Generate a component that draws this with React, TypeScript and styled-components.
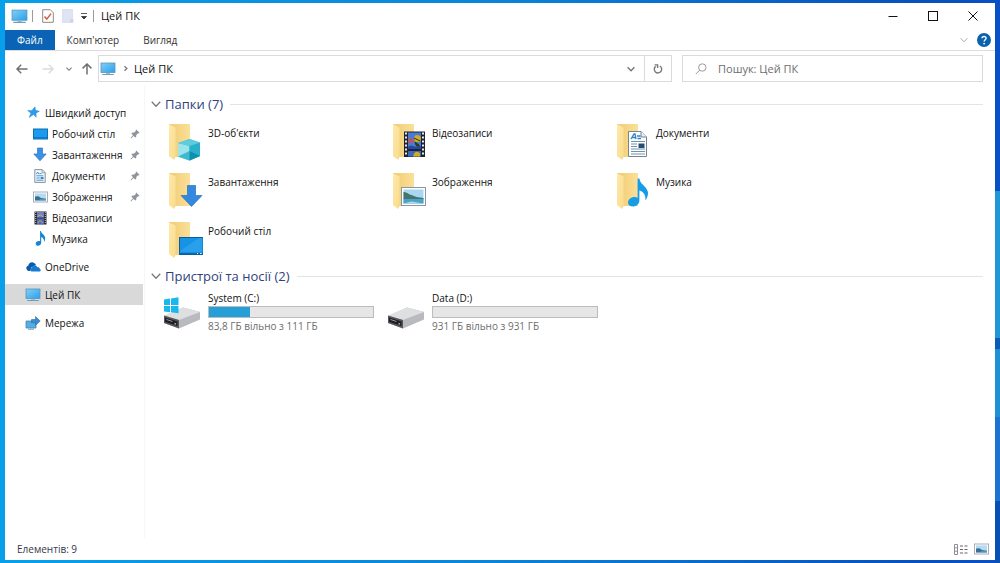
import React from "react";
import styled, { createGlobalStyle } from "styled-components";

const GlobalStyle = createGlobalStyle`
  * { box-sizing: border-box; }
  body { margin: 0; font-family: "Open Sans", "Noto Sans", sans-serif; font-size: 11px; line-height: 16px; color: #111; }
  button, input { font: inherit; color: inherit; margin: 0; }
  svg { display: block; flex: none; }
  h2, p, ul { margin: 0; padding: 0; }
`;

const Desktop = styled.div`
  min-height: 100vh;
  display: flex;
  padding: 3px 5px 3px 5px;
  background:
    linear-gradient(180deg, #0850c4 0 34%, #2098d8 34% 60%, #0a5cb4 60% 62%, #2090d4 62% 74%, #1a74d0 74% 89%, #0a4fb4 89%) right / 5px 100% no-repeat,
    linear-gradient(90deg, #08a0ea 0%, #0a84d8 50%, #0750bd 92%, #0a4fc4 100%);
`;
const Window = styled.main`
  flex: 1;
  min-width: 0;
  display: flex;
  flex-direction: column;
  background: #fff;
`;
const IconButton = styled.button<{ $w?: number }>`
  width: ${(p) => p.$w ?? 20}px;
  padding: 0;
  border: 0;
  background: none;
  display: flex;
  align-items: center;
  justify-content: center;
  align-self: stretch;
`;
const TitleBar = styled.header`
  height: 27px;
  display: flex;
  align-items: center;
  padding: 0 2px 1px 6px;
`;
const Separator = styled.span`
  width: 1px;
  height: 12px;
  background: #9a9a9a;
`;
const WindowTitle = styled.h1`
  flex: 1;
  margin: 0 0 0 5px;
  font-size: 11px;
  font-weight: 400;
`;
const TabRow = styled.nav`
  height: 21px;
  display: flex;
  padding-right: 1px;
  border-bottom: 1px solid #dcdcdc;
`;
const Tab = styled.button<{ $active?: boolean }>`
  border: 0;
  padding: 0 12px;
  font-size: 10px;
  color: ${(p) => (p.$active ? "#fff" : "#333")};
  background: ${(p) => (p.$active ? "#0a63b5" : "none")};
`;
const Spacer = styled.span`
  flex: 1;
`;
const NavRow = styled.div`
  display: flex;
  align-items: center;
  padding: 4px 12px 4px 6px;
`;
const AddressBar = styled.div`
  flex: 1;
  height: 27px;
  display: flex;
  align-items: center;
  border: 1px solid #dadada;
  padding-left: 1px;
`;
const Crumb = styled.span`
  flex: 1;
`;
const Refresh = styled(IconButton)`
  border-left: 1px solid #dadada;
`;
const SearchBox = styled.label`
  width: 301px;
  height: 27px;
  margin-left: 10px;
  padding: 0 12px;
  display: flex;
  align-items: center;
  gap: 11px;
  border: 1px solid #dadada;
`;
const SearchInput = styled.input`
  flex: 1;
  min-width: 0;
  padding: 0;
  border: 0;
  outline: 0;
  background: none;
  &::placeholder { color: #6d6d6d; opacity: 1; }
`;
const Body = styled.div`
  flex: 1;
  display: flex;
  font-size: 10px;
`;
const Sidebar = styled.nav`
  width: 140px;
  padding-top: 16px;
  border-right: 1px solid #f7f7f7;
`;
const NavGroup = styled.ul`
  list-style: none;
  margin-bottom: 7px;
`;
const NavLink = styled.a<{ $nested?: boolean; $selected?: boolean }>`
  height: 21px;
  display: flex;
  align-items: center;
  gap: 4px;
  margin-right: 1px;
  padding: 0 3px 0 ${(p) => (p.$nested ? 27 : 20)}px;
  color: inherit;
  text-decoration: none;
  background: ${(p) => (p.$selected ? "#d9d9d9" : "none")};
`;
const IconSlot = styled.span`
  flex: none;
  width: 16px;
  display: flex;
  justify-content: center;
`;
const NavText = styled.span`
  flex: 1;
  white-space: nowrap;
`;
const Content = styled.section`
  flex: 1;
  min-width: 0;
  padding: 9px 12px 0 6px;
`;
const GroupHeader = styled.h2`
  display: flex;
  align-items: center;
  gap: 4px;
  height: 18px;
  font-size: 13px;
  font-weight: 400;
  color: #2f427d;
  &::after { content: ""; flex: 1; height: 1px; margin-left: 3px; background: #e4e4e4; }
`;
const Tiles = styled.ul`
  list-style: none;
  display: grid;
  grid-template-columns: repeat(auto-fill, 224px);
  grid-auto-rows: 49px;
  padding: 7px 0 0 10px;
`;
const Tile = styled.li`
  display: flex;
  gap: 6px;
  padding-top: 3px;
`;
const TileIcon = styled.span`
  width: 41px;
`;
const TileText = styled.div<{ $drive?: boolean }>`
  flex: 1;
  padding-top: ${(p) => (p.$drive ? 0 : 2)}px;
  margin-right: ${(p) => (p.$drive ? 11 : 0)}px;
`;
const DriveTiles = styled(Tiles)`
  padding-top: 2px;
`;
const Meter = styled.div`
  height: 12px;
  border: 1px solid #bcbcbc;
  background: #e6e6e6;
`;
const Fill = styled.div`
  height: 100%;
  background: #269ed8;
`;
const DriveInfo = styled.p`
  color: #6d6d6d;
`;
const StatusBar = styled.footer`
  height: 22px;
  display: flex;
  align-items: center;
  padding: 0 4px 0 12px;
  font-size: 10px;
  color: #33384a;
`;

/* ---------- icons ---------- */

const Monitor = ({ w = 16 }: { w?: number }) => (
  <svg width={w} height={w} viewBox="0 0 16 16">
    <defs>
      <linearGradient id="scr" x1="0" y1="0" x2="1" y2="1">
        <stop offset="0" stopColor="#7fd0fa" />
        <stop offset="1" stopColor="#2c9fe8" />
      </linearGradient>
    </defs>
    <rect x="1" y="2" width="14" height="9.5" fill="url(#scr)" stroke="#5794bd" strokeWidth=".8" />
    <path d="M6 12h4v1.2H6z" fill="#a3bccd" />
    <path d="M2.5 13h11l.7 1H1.8z" fill="#6f9fbe" />
  </svg>
);
const Chevron = ({ dir = "down", size = 8, color = "#777", w = 1.4 }: { dir?: string; size?: number; color?: string; w?: number }) => (
  <svg width={size} height={size} viewBox="0 0 8 8" fill="none" stroke={color} strokeWidth={w}>
    <path d={dir === "down" ? "M.6 2.2 4 5.8 7.4 2.2" : "M2.8 1.4 5.6 4 2.8 6.6"} />
  </svg>
);
const Arrow = ({ dir, color }: { dir: "left" | "right" | "up"; color: string }) => (
  <svg width="12" height="12" viewBox="0 0 12 12" fill="none" stroke={color} strokeWidth="1.5">
    <path
      d={
        dir === "left"
          ? "M11.5 6H1M5.2 1.8 1 6l4.2 4.2"
          : dir === "right"
            ? "M.5 6H11M6.8 1.8 11 6l-4.2 4.2"
            : "M6 11.5V1M1.6 5.4 6 1l4.4 4.4"
      }
    />
  </svg>
);
const Star = () => (
  <svg width="13" height="13" viewBox="0 0 12 12">
    <path d="M7.400.8 7.900 4l3.500.8-3.100 1.800.2 3.800L6 7.900 2 10.600l1.600-3.900L.6 4.200l3.900-.1z" fill="#2b9df0" stroke="#2380c8" strokeWidth=".4" />
  </svg>
);
const Screen = () => (
  <svg width="15" height="12" viewBox="0 0 15 12">
    <rect x=".5" y="1" width="14" height="10" fill="#1b9bf0" stroke="#0f6fb4" />
    <path d="M1 9.8h13" stroke="#0c6cb8" strokeWidth="1" />
  </svg>
);
const DownArrow = () => (
  <svg width="14" height="15" viewBox="0 0 14 15">
    <path d="M4.5 1h5v6h3.7L7 13.8.8 7h3.7z" fill="#3b92e4" stroke="#2e75c0" strokeWidth=".7" />
  </svg>
);
const Doc = () => (
  <svg width="12" height="14" viewBox="0 0 12 14">
    <path d="M.8.6h7.4l3 3v9.8H.8z" fill="#f6f9fc" stroke="#77858f" strokeWidth=".9" />
    <path d="M8 .8v3h3" fill="none" stroke="#77858f" strokeWidth=".7" />
    <path d="M2.4 5.2 3.6 3 5 5.2M5.5 4.6h2M2.4 6.8h7M2.4 9h3.4M2.4 11.2h7" stroke="#3387c8" fill="none" strokeWidth=".9" />
    <path d="M6.6 8h3v2h-3z" fill="#3387c8" />
  </svg>
);
const Picture = () => (
  <svg width="15" height="12" viewBox="0 0 15 12">
    <rect x=".5" y="1" width="14" height="10" fill="#fff" stroke="#a3b0bb" />
    <rect x="2" y="2.4" width="11" height="7.2" fill="#b5daf3" />
    <path d="M2 5.400 5.5 5.200 8 7l5 .8v1.8H2z" fill="#3a6f90" />
    <path d="M7 8.400h6v1.200H6z" fill="#74b9dc" />
  </svg>
);
const Film = () => (
  <svg width="13" height="14" viewBox="0 0 13 14">
    <path d="M.5.5h12v13H.5z" fill="#27272f" />
    <path d="M3 1h7v5.6H3z" fill="#6d82c6" />
    <path d="M3 7.4h7V13H3z" fill="#5366b8" />
    <path d="m3.4 5.8 3-2 2.6 2M3.4 12l2.6-2.4L9 12" stroke="#c7b94a" fill="none" />
    <path d="M1.7 1v12M11.3 1v12" stroke="#bbc" strokeWidth="1.1" strokeDasharray="1 1" />
  </svg>
);
const Note = ({ w = 11, h = 15 }: { w?: number; h?: number }) => (
  <svg width={w} height={h} viewBox="0 0 18 28">
    <path d="M8.2 0h1.6c.5 5 7.5 7 8 13 .2 3-1 5.600-2.300 7.600.8-5.200-2-8.600-5.200-9.600V22c0 3-2.600 5.500-5.700 5.500C2 27.500 0 26 0 23.600c0-3 3-5 5.600-5 1 0 1.900.2 2.600.6z" fill="#1686d4" />
  </svg>
);
const Cloud = () => (
  <svg width="15" height="11" viewBox="0 0 15 11">
    <path d="M1.500 9.500C-.3 8-.2 5.400 2.200 4.800 2.400 2 5.700.2 8.200 1.900c1 .6 1.500 1.300 1.800 2L5.400 6.400 4.200 10H2.600c-.4 0-.8-.2-1.100-.5z" fill="#0b5cae" />
    <path d="M5.400 10.500C3.700 9.700 4 7.300 5.900 7.100 6.300 4.400 9.900 3.700 11.200 6c2 0 2.500 1 2.500 1.800 1.400.5 1.300 2.400-.2 2.700z" fill="#1a7bd0" />
  </svg>
);
const Network = () => (
  <svg width="16" height="16" viewBox="0 0 16 16">
    <path d="M1 6h10v7H1z" fill="#54aee6" stroke="#4c86ac" strokeWidth=".8" />
    <path d="M3 14.200h6" stroke="#86a6bb" strokeWidth="1.200" />
    <path d="M6.500 4.500h4V1.600L15.200 6l-4.700 4.500V7.800h-4z" fill="#3b8ccd" stroke="#2a6da6" strokeWidth=".6" />
  </svg>
);
const Pin = () => (
  <svg width="10" height="10" viewBox="0 0 10 10">
    <path d="M6.200.6 9.500 3.800 8.600 4.400 8 4.200 6.300 6 6.200 8 5.300 8.600 3.600 6.900 1 9.400.5 9 3 6.300 1.400 4.600 2 3.800l2-.2L5.900 1.900 5.700 1.200z" fill="#8d949b" />
  </svg>
);

const Folder = ({ children }: { children: React.ReactNode }) => (
  <svg width="42" height="42" viewBox="0 0 42 42">
    <defs>
      <linearGradient id="fb" x1="0" y1="0" x2="1" y2="0">
        <stop offset="0" stopColor="#f0cb70" />
        <stop offset="1" stopColor="#fbe09a" />
      </linearGradient>
      <linearGradient id="ff" x1="0" y1="0" x2="1" y2="1">
        <stop offset="0" stopColor="#fde9ac" />
        <stop offset="1" stopColor="#fadb8a" />
      </linearGradient>
    </defs>
    <path d="M8 1h21v33H10z" fill="url(#fb)" />
    <path d="M8 1.300 14.600 4.500v29.500L13.200 37 8 33z" fill="url(#ff)" />
    {children}
  </svg>
);
const overlays: Record<string, React.ReactNode> = {
  cube: (
    <g>
      <path d="m17 20 11.500-4L39 19.500v13.500L28.500 37.500 17 33.500z" fill="#35b9d2" />
      <path d="m17 20 11.500 3v14.500L17 33.500z" fill="#9be4ec" />
      <path d="m28.500 23 10.500-3.500v13.500l-10.500 4.500z" fill="#2bb0ca" />
      <path d="m17 20 11.500-4L39 19.500 28.500 23z" fill="#5fcbdd" />
      <path d="m17 33.500 11.500-5.500v9.500z" fill="#3fb9cd" />
      <path d="M28.500 28 39 33l-10.500 4.500z" fill="#0f8fae" />
    </g>
  ),
  down: <path d="M26.500 13.500h8v10H41L30.500 34.500 20 23.500h6.500z" fill="#3388e0" stroke="#2a70be" strokeWidth=".7" />,
  screen: (
    <g>
      <rect x="18.500" y="16.500" width="23.500" height="17" fill="#1693e6" stroke="#0d5c9c" />
      <path d="M19 30 38 17h3.500v14H19z" fill="#35a8f0" opacity=".6" />
      <path d="M19 32.500h22.500" stroke="#0b6ab5" strokeWidth="1.200" />
      <path d="M36 32.500h1M39 32.500h1.500" stroke="#fff" />
    </g>
  ),
  film: (
    <g>
      <path d="M19 8.500h21V34H19z" fill="#1e2230" />
      <path d="M23 9.500h13V26H23z" fill="#4a7bd4" />
      <path d="M23 28h13v5.500H23z" fill="#3e68bd" />
      <path d="M23 16c2-2 3-1 6 1v3h-6z" fill="#b15873" />
      <path d="M29 15c0-4 6-4 7 0l-1 4h-5zM29 31c1-3 5-3 6 0v2.500h-7z" fill="#d0ad20" />
      <path d="m29 15 6 3m-5 1 4 3v3l-3-3z" stroke="#25351c" fill="#33421d" />
      <path d="M23 24c3-3 6 1 13-1v3H23z" fill="#2a489a" />
      <path d="M21 9.500v24M38 9.500v24" stroke="#fff" strokeWidth="1.800" strokeDasharray="2 2" />
    </g>
  ),
  picture: (
    <g>
      <rect x="16.500" y="15.500" width="24" height="18" fill="#fff" stroke="#8997a3" />
      <path d="M18.500 17.500h20v14h-20z" fill="#a9d7f3" />
      <path d="M18.500 20c3-.5 5 2.500 8 3l5 2 7 1v1.500h-20z" fill="#45766a" />
      <path d="M18.500 27h20v4.500h-20z" fill="#4aa3cd" />
      <path d="m18.500 31.500 8-2 12 2z" fill="#bcd9df" />
    </g>
  ),
  doc: (
    <g>
      <path d="M19.500 8.500H32l5.500 5.500v19.500h-18z" fill="#fff" stroke="#758593" />
      <path d="M32 8.500V14h5.500" fill="#e7eef4" stroke="#758593" />
      <path d="m22 16 3-5h1l1 5m-4-1.500h4M28 13h3.500M28.500 15.500H32" fill="none" stroke="#2d84c8" strokeWidth="1.300" />
      <path d="M22 18.500h14M22 21h6M22 23.500h6M22 26h14M22 28.500h14M22 31h14" stroke="#6f93ae" />
      <path d="M29.500 20.500h6V25h-6z" fill="#264e74" />
    </g>
  ),
  note: (
    <path transform="translate(19 6.500)" d="M9.600 0h1.800c.5 6 8 8 8.600 14 .2 3-1 5.600-2.600 8 .6-5.600-2-9-6-10v9.500c0 3.600-2.600 6.500-6.200 6.500C2 28 0 26.500 0 24c0-3.200 3.300-5.600 6.400-5.600 1.200 0 2.300.3 3.200.8z" fill="#159de8" />
  ),
};

const DriveIcon = ({ windows }: { windows?: boolean }) => (
  <svg width="41" height="42" viewBox="0 0 41 42">
    <path d="m3 26 19-8.500 17 4.500v7.500L18 38.500 3 33z" fill="#b9babd" />
    <path d="m3 25.500 19-8 17 4.500-21 8z" fill="#dedfe1" />
    <path d="m3 25.500 15 4.500v8.500L3 33z" fill="#55575a" />
    <path d="m4 27.500 12.500 4V36L4 31.800z" fill="#1c1d20" />
    <path d="m5.500 29.500 6 2" stroke="#94979a" />
    <path d="m13.500 33.500 1.500.5" stroke="#9fb39f" strokeWidth="1.400" />
    {windows && (
      <path d="m3 9.500 6-.9V15H3zm7-1 7.500-1.200V15H10zM3 16h6v6.200l-6-.8zm7 0h7.500v7.300L10 22.200z" fill="#18b8ee" />
    )}
  </svg>
);

/* ---------- data ---------- */

const quick = [
  { label: "Робочий стіл", icon: <Screen />, pin: true },
  { label: "Завантаження", icon: <DownArrow />, pin: true },
  { label: "Документи", icon: <Doc />, pin: true },
  { label: "Зображення", icon: <Picture />, pin: true },
  { label: "Відеозаписи", icon: <Film /> },
  { label: "Музика", icon: <Note /> },
];
const folders = [
  ["3D-об'єкти", "cube"],
  ["Відеозаписи", "film"],
  ["Документи", "doc"],
  ["Завантаження", "down"],
  ["Зображення", "picture"],
  ["Музика", "note"],
  ["Робочий стіл", "screen"],
];
const drives = [
  { name: "System (C:)", info: "83,8 ГБ вільно з 111 ГБ", used: 25, windows: true },
  { name: "Data (D:)", info: "931 ГБ вільно з 931 ГБ", used: 0, windows: false },
];

type NavItemProps = { label: string; icon: React.ReactNode; nested?: boolean; selected?: boolean; pin?: boolean };
const NavItem = ({ label, icon, nested, selected, pin }: NavItemProps) => (
  <li>
    <NavLink href="#" $nested={nested} $selected={selected} aria-current={selected ? "page" : undefined}>
      <IconSlot>{icon}</IconSlot>
      <NavText>{label}</NavText>
      {pin && <Pin />}
    </NavLink>
  </li>
);

export default function App() {
  return (
    <>
      <GlobalStyle />
      <Desktop>
        <Window>
          <TitleBar>
            <Monitor w={17} />
            <IconButton $w={9} as="span"><Separator /></IconButton>
            <IconButton $w={22} aria-label="Властивості">
              <svg width="12" height="14" viewBox="0 0 12 14">
                <path d="M.7.7h7.600l3 3v9.600H.7z" fill="#fff" stroke="#8b8b8b" />
                <path d="m2.500 7.500 2.300 2.600L9 4.600" fill="none" stroke="#d25f35" strokeWidth="1.500" />
              </svg>
            </IconButton>
            <IconButton $w={18} aria-label="Нова папка">
              <svg width="12" height="14" viewBox="0 0 12 14">
                <path d="M.5.5h10v13H.5z" fill="#dfe4f4" stroke="#dce1f0" />
                <path d="M8 10h3.500v3.500H8z" fill="#cfd5ea" />
              </svg>
            </IconButton>
            <IconButton $w={14} aria-label="Налаштувати панель">
              <svg width="8" height="8" viewBox="0 0 8 8">
                <path d="M1 1.500h6M1.500 4.500h5L4 7z" fill="#333" stroke="#333" strokeWidth=".8" />
              </svg>
            </IconButton>
            <IconButton $w={5} as="span"><Separator /></IconButton>
            <WindowTitle>Цей ПК</WindowTitle>
            <IconButton $w={40} aria-label="Згорнути">
              <svg width="10" height="10"><path d="M.5 5.500h9" stroke="#111" /></svg>
            </IconButton>
            <IconButton $w={40} aria-label="Розгорнути">
              <svg width="10" height="10"><rect x=".5" y=".5" width="9" height="9" fill="none" stroke="#111" /></svg>
            </IconButton>
            <IconButton $w={40} aria-label="Закрити">
              <svg width="10" height="10"><path d="m.5.5 9 9m0-9-9 9" stroke="#111" /></svg>
            </IconButton>
          </TitleBar>
          <TabRow>
            <Tab $active>Файл</Tab>
            <Tab>Комп'ютер</Tab>
            <Tab>Вигляд</Tab>
            <Spacer />
            <IconButton aria-label="Розгорнути стрічку"><Chevron color="#aaa" w={1} /></IconButton>
            <IconButton aria-label="Довідка">
              <svg width="14" height="14" viewBox="0 0 14 14">
                <circle cx="7" cy="7" r="7" fill="#0b62ac" />
                <path d="M5 5.300c.1-2.500 4.200-2.400 4.100 0C9 6.700 7.100 6.800 7.100 8.600" fill="none" stroke="#fff" strokeWidth="1.400" />
                <circle cx="7.100" cy="10.600" r=".9" fill="#fff" />
              </svg>
            </IconButton>
          </TabRow>
          <NavRow>
            <IconButton $w={22} aria-label="Назад"><Arrow dir="left" color="#707070" /></IconButton>
            <IconButton $w={30} aria-label="Уперед" disabled><Arrow dir="right" color="#dcdcdc" /></IconButton>
            <IconButton $w={12} aria-label="Останні розташування"><Chevron size={6} /></IconButton>
            <IconButton $w={23} aria-label="Угору"><Arrow dir="up" color="#707070" /></IconButton>
            <AddressBar>
              <Monitor />
              <IconButton $w={18} as="span"><Chevron dir="right" size={7} /></IconButton>
              <Crumb>Цей ПК</Crumb>
              <IconButton $w={26} aria-label="Попередні розташування"><Chevron /></IconButton>
              <Refresh $w={27} aria-label="Оновити">
                <svg width="10" height="10" viewBox="0 0 10 10" fill="none" stroke="#777" strokeWidth="1.400">
                  <path d="M6.800 2A3.700 3.700 0 1 1 2.600 2.400M1.600.9h3v3" />
                </svg>
              </Refresh>
            </AddressBar>
            <SearchBox>
              <svg width="12" height="12" viewBox="0 0 12 12" fill="none" stroke="#999">
                <circle cx="7.300" cy="4.500" r="3.700" />
                <path d="M4.600 7.200.8 11" />
              </svg>
              <SearchInput type="search" aria-label="Пошук" placeholder="Пошук: Цей ПК" />
            </SearchBox>
          </NavRow>
          <Body>
            <Sidebar>
              <NavGroup>
                <NavItem label="Швидкий доступ" icon={<Star />} />
                {quick.map((q) => <NavItem key={q.label} nested {...q} />)}
              </NavGroup>
              <NavGroup><NavItem label="OneDrive" icon={<Cloud />} /></NavGroup>
              <NavGroup><NavItem label="Цей ПК" icon={<Monitor />} selected /></NavGroup>
              <NavGroup><NavItem label="Мережа" icon={<Network />} /></NavGroup>
            </Sidebar>
            <Content>
              <GroupHeader><Chevron size={10} w={1} />Папки (7)</GroupHeader>
              <Tiles>
                {folders.map(([name, kind]) => (
                  <Tile key={name}>
                    <TileIcon><Folder>{overlays[kind]}</Folder></TileIcon>
                    <TileText>{name}</TileText>
                  </Tile>
                ))}
              </Tiles>
              <GroupHeader><Chevron size={10} w={1} />Пристрої та носії (2)</GroupHeader>
              <DriveTiles>
                {drives.map((d) => (
                  <Tile key={d.name}>
                    <TileIcon><DriveIcon windows={d.windows} /></TileIcon>
                    <TileText $drive>
                      {d.name}
                      <Meter><Fill style={{ width: `${d.used}%` }} /></Meter>
                      <DriveInfo>{d.info}</DriveInfo>
                    </TileText>
                  </Tile>
                ))}
              </DriveTiles>
            </Content>
          </Body>
          <StatusBar>
            Елементів: 9
            <Spacer />
            <IconButton aria-label="Таблиця">
              <svg width="14" height="11" viewBox="0 0 14 11" fill="none">
                <path d="M.5.5h3v10h-3zM.5 3.800h3M.5 7.200h3" stroke="#8b8f96" />
                <path d="M6 2h3m1.500 0h3M6 5.500h3m1.500 0h3M6 9h3m1.500 0h3" stroke="#666" />
              </svg>
            </IconButton>
            <IconButton aria-label="Великі ескізи"><Picture /></IconButton>
          </StatusBar>
        </Window>
      </Desktop>
    </>
  );
}
